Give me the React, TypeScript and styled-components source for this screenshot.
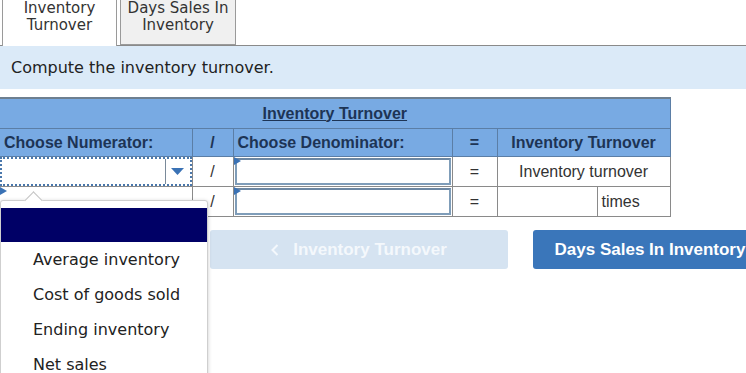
import React from "react";
import styled, { createGlobalStyle } from "styled-components";

const Global = createGlobalStyle`
  html, body { margin: 0; padding: 0; background: #fff; overflow: hidden; }
  body { font-family: "DejaVu Sans", Verdana, sans-serif; color: #222; }
`;

const Page = styled.div`
  position: relative;
  width: 746px;
  height: 373px;
  overflow: hidden;
`;

const TabBar = styled.div`
  display: flex;
  align-items: flex-end;
  height: 46px;
  padding-left: 2px;
  box-sizing: border-box;
  border-bottom: 1px solid #8a8a8a;
`;

const Tab = styled.div<{ $active?: boolean }>`
  box-sizing: border-box;
  width: ${(p) => (p.$active ? "115px" : "116px")};
  height: ${(p) => (p.$active ? "46px" : "45px")};
  margin-right: ${(p) => (p.$active ? "3px" : "0")};
  margin-bottom: ${(p) => (p.$active ? "-1px" : "0")};
  border: 1px solid #9a9a9a;
  border-top: none;
  border-bottom: ${(p) => (p.$active ? "none" : "1px solid #9a9a9a")};
  background: ${(p) => (p.$active ? "#fff" : "#f0f0f0")};
  font-size: 15px;
  line-height: 17px;
  color: #333;
  text-align: center;
  margin-top: -2px;
`;

const Instruction = styled.div`
  background: #dbeaf8;
  height: 43px;
  padding-left: 11px;
  display: flex;
  align-items: center;
  font-size: 16px;
  color: #222;
`;

const TableWrap = styled.div`
  margin-top: 8px;
`;

const Table = styled.table`
  border-collapse: collapse;
  width: 670px;
  font-family: "Liberation Sans", Arial, sans-serif;
  border-top: 2px solid #6d7f90;
  table-layout: fixed;
`;

const TitleCell = styled.th`
  background: #78aae3;
  height: 29px;
  padding: 0;
  font-size: 16px;
  font-weight: bold;
  color: #1d3455;
  text-decoration: underline;
  border-right: 1px solid #5b7ea6;
  border-bottom: 1px solid #5b7ea6;
`;

const HeadCell = styled.th<{ $align?: string }>`
  background: #78aae3;
  height: 27px;
  padding: 0 4px;
  font-size: 16px;
  font-weight: bold;
  color: #1d3455;
  text-align: ${(p) => p.$align || "center"};
  border: 1px solid #5b7ea6;
  border-left: none;
  white-space: nowrap;
  line-height: 24px;
`;

const Cell = styled.td<{ $align?: string }>`
  height: 28px;
  padding: 0;
  font-size: 16px;
  color: #333;
  text-align: ${(p) => p.$align || "center"};
  border: 1px solid #8a8a8a;
  border-left: none;
  position: relative;
  white-space: nowrap;
`;

const SplitCell = styled.div`
  display: grid;
  grid-template-columns: 100px 1fr;
  height: 100%;
`;

const SplitPart = styled.div<{ $border?: boolean }>`
  border-right: ${(p) => (p.$border ? "1px solid #8a8a8a" : "none")};
  text-align: left;
  padding-left: 4px;
  display: flex;
  align-items: center;
`;

const SelectBox = styled.div`
  box-sizing: border-box;
  height: 29px;
  margin: -1px 0 0;
  border: 2px dotted #4a78ac;
  display: grid;
  grid-template-columns: 1fr 25px;
  background: #fff;
`;

const SelectArrow = styled.div`
  border-left: 1px solid #7a8a9a;
  display: flex;
  align-items: center;
  justify-content: center;
`;

const InputBox = styled.div`
  box-sizing: border-box;
  height: 27px;
  margin: 1px;
  border: 2px solid #7f9db9;
  border-top-color: #6d87a2;
  background: #fff;
`;

const Marker = styled.span`
  position: absolute;
  left: 0;
  top: 0;
  width: 0;
  height: 0;
  border-top: 4px solid transparent;
  border-bottom: 4px solid transparent;
  border-left: 7px solid #3a72b5;
`;

const ButtonRow = styled.div`
  display: flex;
  gap: 25px;
  padding-left: 210px;
  margin-top: 13px;
`;

const Button = styled.div<{ $primary?: boolean }>`
  flex: none;
  box-sizing: border-box;
  height: 39px;
  width: ${(p) => (p.$primary ? "234px" : "298px")};
  border-radius: 3px;
  background: ${(p) => (p.$primary ? "#3a76ba" : "#d5e3f1")};
  color: ${(p) => (p.$primary ? "#fff" : "#f4f8fc")};
  font-family: "Liberation Sans", Arial, sans-serif;
  font-weight: bold;
  font-size: 17px;
  display: flex;
  align-items: center;
  justify-content: center;
  gap: 14px;
`;

const Popup = styled.div`
  position: absolute;
  left: 0;
  top: 200px;
  width: 208px;
  height: 200px;
  box-sizing: border-box;
  background: #fff;
  border: 1px solid #cfcfcf;
  border-radius: 3px;
  box-shadow: 0 1px 4px rgba(0, 0, 0, 0.2);
  padding-top: 7px;
`;

const Notch = styled.span`
  position: absolute;
  left: 26px;
  top: -7px;
  width: 12px;
  height: 12px;
  background: #fff;
  border-left: 1px solid #c4c4c4;
  border-top: 1px solid #c4c4c4;
  transform: rotate(45deg);
`;

const Highlight = styled.div`
  height: 34px;
  background: #000066;
  position: relative;
`;

const Option = styled.div`
  height: 35px;
  line-height: 35px;
  padding-left: 32px;
  font-size: 16px;
  color: #222;
`;

export default function App() {
  return (
    <Page>
      <Global />
      <TabBar>
        <Tab $active>
          Inventory
          <br />
          Turnover
        </Tab>
        <Tab>
          Days Sales In
          <br />
          Inventory
        </Tab>
      </TabBar>
      <Instruction>Compute the inventory turnover.</Instruction>
      <TableWrap>
        <Table>
          <colgroup>
            <col style={{ width: 192 }} />
            <col style={{ width: 41 }} />
            <col style={{ width: 219 }} />
            <col style={{ width: 45 }} />
            <col style={{ width: 173 }} />
          </colgroup>
          <thead>
            <tr>
              <TitleCell colSpan={5}>Inventory Turnover</TitleCell>
            </tr>
            <tr>
              <HeadCell $align="left">Choose Numerator:</HeadCell>
              <HeadCell>/</HeadCell>
              <HeadCell $align="left">Choose Denominator:</HeadCell>
              <HeadCell>=</HeadCell>
              <HeadCell>Inventory Turnover</HeadCell>
            </tr>
          </thead>
          <tbody>
            <tr>
              <Cell>
                <SelectBox>
                  <span />
                  <SelectArrow>
                    <svg width="13" height="7" viewBox="0 0 13 7">
                      <path d="M0 0 L13 0 L6.5 7 Z" fill="#3a72b5" />
                    </svg>
                  </SelectArrow>
                </SelectBox>
              </Cell>
              <Cell>/</Cell>
              <Cell>
                <Marker />
                <InputBox />
              </Cell>
              <Cell>=</Cell>
              <Cell>Inventory turnover</Cell>
            </tr>
            <tr>
              <Cell>
                <Marker />
              </Cell>
              <Cell>/</Cell>
              <Cell>
                <Marker />
                <InputBox />
              </Cell>
              <Cell>=</Cell>
              <Cell>
                <SplitCell>
                  <SplitPart $border />
                  <SplitPart>times</SplitPart>
                </SplitCell>
              </Cell>
            </tr>
          </tbody>
        </Table>
      </TableWrap>
      <ButtonRow>
        <Button>
          <svg width="8" height="12" viewBox="0 0 8 12">
            <path d="M6.5 1 L1.5 6 L6.5 11" stroke="#f4f8fc" strokeWidth="2" fill="none" />
          </svg>
          <span>Inventory Turnover</span>
        </Button>
        <Button $primary>Days Sales In Inventory</Button>
      </ButtonRow>
      <Popup>
        <Notch />
        <Highlight />
        <Option>Average inventory</Option>
        <Option>Cost of goods sold</Option>
        <Option>Ending inventory</Option>
        <Option>Net sales</Option>
      </Popup>
    </Page>
  );
}
